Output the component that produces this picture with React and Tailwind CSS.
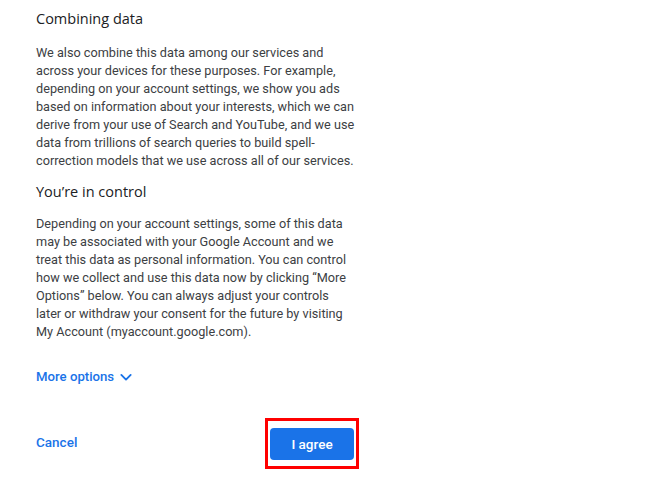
const body1 = [
  "We also combine this data among our services and",
  "across your devices for these purposes. For example,",
  "depending on your account settings, we show you ads",
  "based on information about your interests, which we can",
  "derive from your use of Search and YouTube, and we use",
  "data from trillions of search queries to build spell-",
  "correction models that we use across all of our services.",
];
const body2 = [
  "Depending on your account settings, some of this data",
  "may be associated with your Google Account and we",
  "treat this data as personal information. You can control",
  "how we collect and use this data now by clicking “More",
  "Options” below. You can always adjust your controls",
  "later or withdraw your consent for the future by visiting",
  "My Account (myaccount.google.com).",
];

export default function App() {
  return (
    <div className="relative w-[668px] h-[489px] bg-white overflow-hidden" style={{ fontFamily: "Roboto, 'Liberation Sans', sans-serif" }}>
      <div className="pl-[36px] w-[360px] pt-[7px]">
        <h2 className="text-[14.5px] leading-[24px] font-medium text-[#202124]" style={{ fontFamily: "'Open Sans', Roboto, sans-serif" }}>Combining data</h2>
        <p className="mt-[12.5px] text-[12.7px] leading-[18px] text-[#3c4043]">
          {body1.map((l, i) => (<span key={i} className="block whitespace-nowrap">{l}</span>))}
        </p>
        <h2 className="mt-[10.5px] text-[14.5px] leading-[24px] font-medium text-[#202124]" style={{ fontFamily: "'Open Sans', Roboto, sans-serif" }}>You’re in control</h2>
        <p className="mt-[11px] text-[12.7px] leading-[18px] text-[#3c4043]">
          {body2.map((l, i) => (<span key={i} className="block whitespace-nowrap">{l}</span>))}
        </p>
        <button className="mt-[25.7px] flex items-center gap-[5px] text-[13.2px] leading-[20px] font-medium text-[#1a73e8]">
          More options
          <svg width="14" height="14" viewBox="0 0 24 24" fill="none" stroke="#1a73e8" strokeWidth="3.2" strokeLinecap="round" strokeLinejoin="round"><path d="M4 8.5l8 8 8-8" /></svg>
        </button>
        <div className="mt-[41px] flex items-center justify-between w-[318px]">
          <button className="mb-[4px] text-[13.5px] leading-[20px] font-medium text-[#1a73e8]">Cancel</button>
          <div className="relative">
            <button className="w-[84px] h-[32px] rounded-[4px] bg-[#1a73e8] text-white text-[13.5px] font-medium">I agree</button>
            <div className="absolute left-[-5px] top-[-10px] w-[94px] h-[51px] border-[3px] border-[#ff0000] pointer-events-none"></div>
          </div>
        </div>
      </div>
    </div>
  );
}
